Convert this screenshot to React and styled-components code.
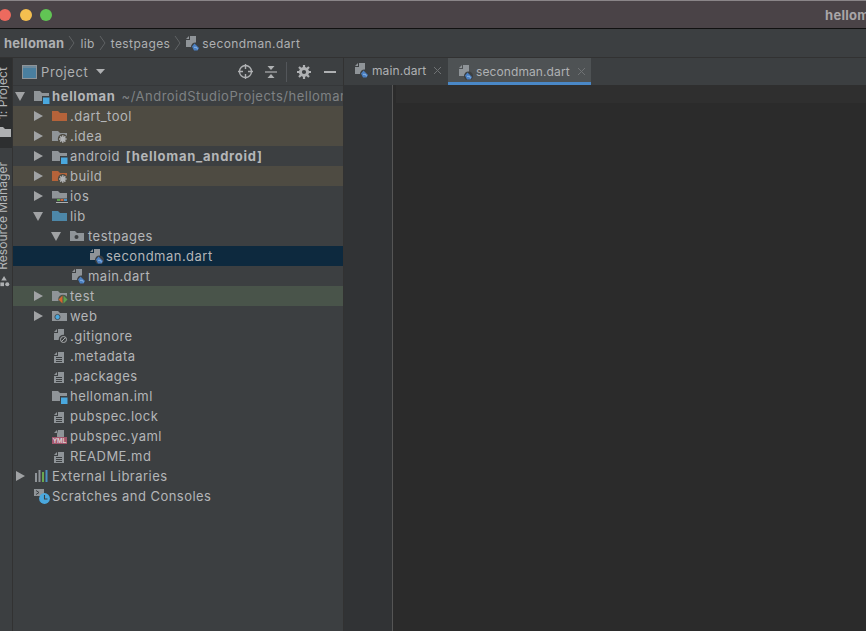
import React from "react";
import styled, { createGlobalStyle } from "styled-components";

const Global = createGlobalStyle`
  html, body { margin: 0; padding: 0; background: #2b2b2b; }
  body { font-family: Inter, "Liberation Sans", sans-serif; -webkit-font-smoothing: antialiased; }
`;

const Page = styled.div`
  width: 866px; height: 631px; overflow: hidden; display: flex; flex-direction: column;
  background: #3c3f41; color: #bbbbbb; font-size: 13px; letter-spacing: 0.5px;
`;
const TitleBar = styled.div`
  height: 29px; flex: none; display: flex; align-items: center; box-sizing: border-box;
  background: #4a4347; border-top: 1px solid #8a8588; border-bottom: 1px solid #111;
  gap: 8.5px;
`;
const Light = styled.span`
  width: 12px; height: 12px; border-radius: 50%; flex: none; background: ${p => p.$c};
  &:first-child { margin-left: -1px; }
`;
const WinTitle = styled.div`
  margin-left: auto; width: 41px; overflow: hidden; white-space: nowrap; font-weight: 700; font-size: 13px; color: #a9a6a8; letter-spacing: 0.3px;
`;
const Crumbs = styled.div`
  height: 29px; flex: none; box-sizing: border-box; display: flex; align-items: center; padding-left: 4px;
  border-bottom: 1px solid #323232; background: #3c3f41;
`;
const CrumbText = styled.span`
  font-weight: ${p => (p.$bold ? 700 : 400)}; font-size: ${p => (p.$bold ? 13 : 12)}px; letter-spacing: ${p => (p.$bold ? 0.25 : 0.4)}px;
  color: #aeb0b2; white-space: nowrap;
`;
const CrumbSep = styled.svg`
  width: 7px; height: 16px; margin: 0 5px 0 4px; flex: none;
`;
const CrumbIcon = styled.span`
  display: flex; margin-left: -2px;
`;
const Body = styled.div`
  flex: 1; min-height: 0; display: flex;
`;
const Stripe = styled.div`
  width: 13px; flex: none; background: #3c3f41; border-right: 1px solid #323232; box-sizing: border-box;
  display: flex; flex-direction: column; align-items: flex-end; overflow: hidden;
`;
const StripeTab = styled.div`
  width: 100%; height: ${p => p.$h}px; flex: none; display: flex; align-items: center; justify-content: flex-start;
  flex-direction: column-reverse; gap: ${p => p.$gap}px; background: ${p => (p.$active ? "#2d2f30" : "transparent")};
  padding-bottom: ${p => p.$pb}px; box-sizing: border-box;
`;
const StripeLabel = styled.span`
  writing-mode: vertical-rl; transform: rotate(180deg); font-size: 12px; line-height: 13px; white-space: nowrap; color: #b4b6b8;
  margin-left: -7px; letter-spacing: 0.05px;
`;
const StripeIcon = styled.svg`
  margin-left: -4px; flex: none;
`;
const Panel = styled.div`
  width: 331px; flex: none; display: flex; flex-direction: column; border-right: 1px solid #323232; box-sizing: border-box; overflow: hidden;
`;
const PanelHead = styled.div`
  height: 28px; flex: none; display: flex; align-items: center; padding-left: 9px; box-sizing: border-box;
  border-bottom: 1px solid #353739;
`;
const PanelTitle = styled.span`
  margin-left: 4px; color: #aeb0b2; letter-spacing: 0.6px;
`;
const HeadCaret = styled.svg`
  margin-left: 8px;
`;
const HeadTools = styled.div`
  margin-left: auto; display: flex; align-items: center; height: 100%;
`;
const ToolIcon = styled.svg`
  margin-left: ${p => p.$ml || 0}px; margin-right: ${p => p.$mr || 0}px; flex: none;
`;
const ToolDivider = styled.span`
  width: 1px; height: 20px; background: #53565a; margin: 0 10px 0 8px;
`;
const Tree = styled.div`
  display: flex; flex-direction: column;
`;
const Row = styled.div`
  height: 20px; flex: none; display: flex; align-items: center; background: ${p => p.$bg || "transparent"};
  padding-left: ${p => p.$level * 18}px; white-space: nowrap;
`;
const ArrowBox = styled.span`
  width: 14px; height: 20px; flex: none; display: flex; align-items: center; justify-content: center; margin-right: 7px;
`;
const IconBox = styled.svg`
  width: 16px; height: 16px; flex: none; margin-right: 2px; display: block;
`;
const Name = styled.span`
  color: #b4b6b8; font-weight: ${p => (p.$bold ? 700 : 400)}; letter-spacing: ${p => (p.$bold ? 0.65 : 0.47)}px;
`;
const Hint = styled.span`
  color: #7f8284; margin-left: 6px; letter-spacing: 0.5px;
`;
const Strong = styled.span`
  font-weight: 700; margin-left: 6px; letter-spacing: 0.75px; color: #b4b6b8;
`;
const Main = styled.div`
  flex: 1; min-width: 0; display: flex; flex-direction: column;
`;
const Tabs = styled.div`
  height: 27px; flex: none; display: flex; background: #3c3f41;
`;
const Tab = styled.div`
  height: 27px; box-sizing: border-box; width: ${p => p.$w}px; display: flex; align-items: center; padding-left: 9px; gap: 1px;
  background: ${p => (p.$active ? "#4e5254" : "transparent")};
  border-bottom: 3px solid ${p => (p.$active ? "#4a88c7" : "transparent")};
  padding-top: ${p => (p.$active ? 3 : 0)}px; white-space: nowrap; color: #afb1b3; font-size: 12px; letter-spacing: 0.1px;
`;
const TabClose = styled.svg`
  width: 9px; height: 9px; margin-left: 6px; flex: none;
`;
const Editor = styled.div`
  flex: 1; min-height: 0; display: flex; background: #2b2b2b;
`;
const Gutter = styled.div`
  width: 49px; flex: none; background: #313335; border-right: 1px solid #555; box-sizing: border-box;
`;
const Code = styled.div`
  flex: 1; display: flex; flex-direction: column; padding-left: 3px;
`;
const CurrentLine = styled.div`
  height: 18px; background: #2f2f2f;
`;

const Folder = ({ c = "#8f9498" }) => <path d="M0 3h6l2 2h7v8H0z" fill={c} />;
const Badge = () => (
  <>
    <rect x="8" y="8" width="8" height="8" fill="#3c3f41" />
    <rect x="9" y="9.5" width="6.5" height="6.5" fill="#4aa8de" />
  </>
);
const Pin = ({ bg }) => (
  <g>
    <circle cx="10.8" cy="11" r="5" fill={bg} />
    <path d="M10.8 7.2v7.6M7 11h7.6M8.2 8.4l5.2 5.2M13.4 8.4l-5.2 5.2" stroke="#b0b2b4" strokeWidth="1.5" />
  </g>
);
const Sheet = ({ children, top = 4 }) => (
  <>
    <path d={`M6 ${top}h6v11H2V${top + 4}h4z`} fill="#8f9498" />
    <path d={`M5 ${top}v3H2z`} fill="#8f9498" />
    {children}
  </>
);
const TextLines = () => (
  <path d="M4 9.5h6M4 11.5h6M4 13.5h6" stroke="#3c3f41" strokeWidth="1" />
);
const DartBadge = () => (
  <g>
    <circle cx="11.5" cy="12" r="4.5" fill="#3c3f41" />
    <path d="M8 11.5l2.5-3 4.5 4.5-1.5 2.5h-3.5z" fill="#4a7fc1" />
    <path d="M10 12.3l2.5 0 1 2" stroke="#9cc3ee" strokeWidth="0.8" fill="none" />
  </g>
);

const icons = {
  module: <><Folder /><Badge /></>,
  orange: <Folder c="#b5633a" />,
  idea: <><Folder /><Pin bg="#4e4b42" /></>,
  build: <><Folder c="#b5633a" /><Pin bg="#4e4b42" /></>,
  ios: (
    <>
      <Folder />
      <path d="M0 12h15" stroke="#3c3f41" strokeWidth="3" />
      <rect x="5" y="11" width="3" height="2" fill="#5fa04e" />
      <rect x="8.5" y="11" width="3" height="2" fill="#cc6a3d" />
      <rect x="12" y="11" width="3" height="2" fill="#4a90c2" />
      <path d="M4 14.5h12" stroke="#aeb0b2" strokeWidth="1" />
    </>
  ),
  lib: <Folder c="#4d87a8" />,
  pkg: (
    <>
      <path d="M0 3h5l2 2h7v8H0z" fill="#8f9498" />
      <circle cx="6.5" cy="9" r="2" fill="#3c3f41" />
    </>
  ),
  dart: <Sheet top={1}><DartBadge /></Sheet>,
  test: (
    <>
      <Folder />
      <circle cx="11" cy="11.5" r="4.8" fill="#49544a" />
      <path d="M10.5 7.5v8l-4-4z" fill="#d6672f" />
      <path d="M11.5 7.5v8l4-4z" fill="#5fa04e" />
    </>
  ),
  web: (
    <>
      <Folder />
      <circle cx="5.5" cy="9" r="2.6" fill="#4aa8de" stroke="#3c3f41" strokeWidth="0.8" />
    </>
  ),
  ignore: (
    <Sheet top={1}>
      <circle cx="11.5" cy="11.5" r="4.8" fill="#3c3f41" />
      <circle cx="11.5" cy="11.5" r="3" fill="none" stroke="#a8aaac" strokeWidth="1" />
      <path d="M9.5 13.5l4-4" stroke="#a8aaac" strokeWidth="1" />
    </Sheet>
  ),
  text: <Sheet><TextLines /></Sheet>,
  yml: (
    <>
      <path d="M6 2h6v7H5V6z" fill="#8f9498" />
      <path d="M5 2v3H2z" fill="#8f9498" />
      <rect x="0" y="9" width="15" height="7" fill="#a3566c" />
      <text x="7.5" y="14.6" fontSize="6.5" fontWeight="700" textAnchor="middle" fill="#dcd0d3" fontFamily="Liberation Sans, sans-serif" letterSpacing="0">YML</text>
    </>
  ),
  libs: (
    <g strokeWidth="2">
      <path d="M2 5v9" stroke="#8f9498" />
      <path d="M5.5 2v12" stroke="#8f9498" />
      <path d="M9 4v10" stroke="#6aa84f" />
      <path d="M12.5 2v12" stroke="#4a90c2" />
    </g>
  ),
  scratch: (
    <>
      <path d="M0 1h10v7H0z" fill="#8f9498" />
      <path d="M2 2.5l3 2-3 2" stroke="#3c3f41" fill="none" />
      <circle cx="10.5" cy="10.5" r="5.4" fill="#4aa8de" />
      <path d="M10.5 7v4h3" stroke="#3c3f41" strokeWidth="1.1" fill="none" />
    </>
  ),
};

const Icon = ({ name }) => <IconBox viewBox="0 0 16 16">{icons[name]}</IconBox>;

const Arrow = ({ state }) => (
  <ArrowBox>
    {state === "closed" && <svg width="9" height="10" viewBox="0 0 9 10"><path d="M0 0l9 5-9 5z" fill="#a0a2a4" /></svg>}
    {state === "open" && <svg width="10" height="9" viewBox="0 0 10 9"><path d="M0 0h10L5 9z" fill="#a0a2a4" /></svg>}
  </ArrowBox>
);

const rows = [
  { level: 0, arrow: "open", icon: "module", name: "helloman", bold: true, hint: "~/AndroidStudioProjects/helloman" },
  { level: 1, arrow: "closed", icon: "orange", name: ".dart_tool", bg: "#4e4b42" },
  { level: 1, arrow: "closed", icon: "idea", name: ".idea", bg: "#4e4b42" },
  { level: 1, arrow: "closed", icon: "module", name: "android", strong: "[helloman_android]" },
  { level: 1, arrow: "closed", icon: "build", name: "build", bg: "#4e4b42" },
  { level: 1, arrow: "closed", icon: "ios", name: "ios" },
  { level: 1, arrow: "open", icon: "lib", name: "lib" },
  { level: 2, arrow: "open", icon: "pkg", name: "testpages" },
  { level: 3, icon: "dart", name: "secondman.dart", bg: "#0d293e" },
  { level: 2, icon: "dart", name: "main.dart" },
  { level: 1, arrow: "closed", icon: "test", name: "test", bg: "#49544a" },
  { level: 1, arrow: "closed", icon: "web", name: "web" },
  { level: 1, icon: "ignore", name: ".gitignore" },
  { level: 1, icon: "text", name: ".metadata" },
  { level: 1, icon: "text", name: ".packages" },
  { level: 1, icon: "module", name: "helloman.iml" },
  { level: 1, icon: "text", name: "pubspec.lock" },
  { level: 1, icon: "yml", name: "pubspec.yaml" },
  { level: 1, icon: "text", name: "README.md" },
  { level: 0, arrow: "closed", icon: "libs", name: "External Libraries" },
  { level: 0, icon: "scratch", name: "Scratches and Consoles" },
];

const Sep = () => (
  <CrumbSep viewBox="0 0 7 16"><path d="M1 1l5 7-5 7" fill="none" stroke="#5f6264" strokeWidth="1" /></CrumbSep>
);
const Close = () => (
  <TabClose viewBox="0 0 9 9"><path d="M1 1l7 7M8 1l-7 7" stroke="#6f7274" strokeWidth="1" /></TabClose>
);

export default function App() {
  return (
    <Page>
      <Global />
      <TitleBar>
        <Light $c="#ed6a5e" />
        <Light $c="#f5bf4f" />
        <Light $c="#61c554" />
        <WinTitle>helloman</WinTitle>
      </TitleBar>
      <Crumbs>
        <CrumbText $bold>helloman</CrumbText><Sep />
        <CrumbText>lib</CrumbText><Sep />
        <CrumbText>testpages</CrumbText><Sep />
        <CrumbIcon><Icon name="dart" /></CrumbIcon>
        <CrumbText>secondman.dart</CrumbText>
      </Crumbs>
      <Body>
        <Stripe>
          <StripeTab $active $h={90} $pb={10} $gap={7}>
            <StripeIcon width="13" height="12" viewBox="0 0 13 12"><path d="M0 1h5l2 2h6v8H0z" fill="#aeb0b2" /></StripeIcon>
            <StripeLabel>1: Project</StripeLabel>
          </StripeTab>
          <StripeTab $h={145} $pb={5} $gap={6}>
            <StripeIcon width="13" height="12" viewBox="0 0 13 13">
              <path d="M6 0l3 5H3z" fill="#aeb0b2" /><rect x="2" y="7" width="4" height="4" fill="#aeb0b2" /><circle cx="9.5" cy="9" r="2.2" fill="#aeb0b2" />
            </StripeIcon>
            <StripeLabel>Resource Manager</StripeLabel>
          </StripeTab>
        </Stripe>
        <Panel>
          <PanelHead>
            <svg width="15" height="14" viewBox="0 0 15 14">
              <rect x="0.5" y="0.5" width="14" height="13" fill="#4a7f9f" stroke="#8f9498" />
              <path d="M1 2h13" stroke="#8f9498" />
            </svg>
            <PanelTitle>Project</PanelTitle>
            <HeadCaret width="9" height="5" viewBox="0 0 9 5"><path d="M0 0h9L4.5 5z" fill="#aeb0b2" /></HeadCaret>
            <HeadTools>
              <ToolIcon width="15" height="15" viewBox="0 0 15 15">
                <circle cx="7.5" cy="7.5" r="6" fill="none" stroke="#afb1b3" strokeWidth="1.4" />
                <path d="M7.5 0v5M7.5 10v5M0 7.5h5M10 7.5h5" stroke="#afb1b3" strokeWidth="1.4" />
              </ToolIcon>
              <ToolIcon $ml={11} width="14" height="14" viewBox="0 0 14 14">
                <path d="M1 7h12" stroke="#afb1b3" strokeWidth="1.2" />
                <path d="M3.5 1h7L7 5zM3.5 13h7L7 9z" fill="#afb1b3" />
              </ToolIcon>
              <ToolDivider />
              <ToolIcon width="14" height="14" viewBox="0 0 14 14">
                <circle cx="7" cy="7" r="3.6" fill="none" stroke="#afb1b3" strokeWidth="3" />
                <path d="M7 0v3M7 11v3M0 7h3M11 7h3M2 2l2 2M10 10l2 2M12 2l-2 2M4 10l-2 2" stroke="#afb1b3" strokeWidth="2.2" />
              </ToolIcon>
              <ToolIcon $ml={13} $mr={7} width="12" height="2" viewBox="0 0 12 2"><path d="M0 1h12" stroke="#afb1b3" strokeWidth="2" /></ToolIcon>
            </HeadTools>
          </PanelHead>
          <Tree>
            {rows.map(r => (
              <Row key={r.name} $level={r.level} $bg={r.bg}>
                <Arrow state={r.arrow} />
                <Icon name={r.icon} />
                <Name $bold={r.bold}>{r.name}</Name>
                {r.strong && <Strong>{r.strong}</Strong>}
                {r.hint && <Hint>{r.hint}</Hint>}
              </Row>
            ))}
          </Tree>
        </Panel>
        <Main>
          <Tabs>
            <Tab $w={104}><Icon name="dart" />main.dart<Close /></Tab>
            <Tab $active $w={143}><Icon name="dart" />secondman.dart<Close /></Tab>
          </Tabs>
          <Editor>
            <Gutter />
            <Code><CurrentLine /></Code>
          </Editor>
        </Main>
      </Body>
    </Page>
  );
}
